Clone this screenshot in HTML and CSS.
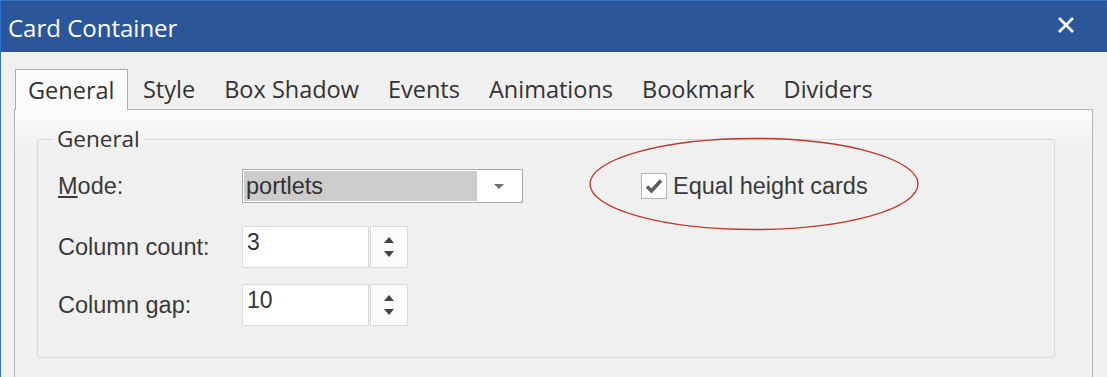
FILE: index.html
```html
<!DOCTYPE html>
<html lang="en">
<head>
  <meta charset="UTF-8" />
  <title>Card Container</title>
  <link rel="stylesheet" href="styles.css">
</head>
<body>

  <div class="window">
    <div class="titlebar">
      <span class="title">Card Container</span>
      <svg class="close" width="18" height="18" viewBox="0 0 18 18">
        <path d="M2 2 L16 16 M16 2 L2 16" stroke="#fff" stroke-width="2.6" fill="none"/>
      </svg>
    </div>

    <div class="tabs">
      <div class="tab active">General</div>
      <div class="tab">Style</div>
      <div class="tab">Box Shadow</div>
      <div class="tab">Events</div>
      <div class="tab">Animations</div>
      <div class="tab">Bookmark</div>
      <div class="tab">Dividers</div>
    </div>

    <div class="panel">
      <fieldset class="group">
        <legend>General</legend>

        <div class="row row-mode">
          <label class="label"><u>M</u>ode:</label>
          <div class="combo">
            <span class="combo-value">portlets</span>
            <span class="combo-arrow"></span>
          </div>
          <div class="check">
            <span class="check-box">
              <svg width="20" height="18" viewBox="0 0 20 18">
                <path d="M3 9.5 L7.5 14 L17 3.5" stroke="#5a5a5a" stroke-width="3.4" fill="none"/>
              </svg>
            </span>
            <span>Equal height cards</span>
            <!-- red annotation ring -->
            <svg class="ring" width="334" height="96" viewBox="0 0 334 96">
              <ellipse cx="167" cy="48" rx="164" ry="45.5" fill="none" stroke="#c0392b" stroke-width="1.4"/>
            </svg>
          </div>
        </div>

        <div class="row row-count">
          <label class="label">Column count:</label>
          <div class="spin">
            <span class="spin-value">3</span>
            <span class="spin-btns"><i class="up"></i><i class="down"></i></span>
          </div>
        </div>

        <div class="row row-gap">
          <label class="label">Column gap:</label>
          <div class="spin">
            <span class="spin-value">10</span>
            <span class="spin-btns"><i class="up"></i><i class="down"></i></span>
          </div>
        </div>
      </fieldset>
    </div>
  </div>

</body>
</html>
```

FILE: styles.css
```css
* {
  box-sizing: border-box;
  margin: 0;
  padding: 0;
}

html, body {
  height: 377px;
  overflow: hidden;
}

body {
  background: #f0f0f0;
  font-family: 'Liberation Sans', Arial, sans-serif;
  color: #3a3a3a;
}

.window {
  height: 377px;
  border-left: 1px solid #2a72d8;
}

/* Title bar */
.titlebar {
  height: 52px;
  background: #2b579a;
  border-top: 1px solid #3a6fc0;
  display: flex;
  align-items: center;
  justify-content: space-between;
  padding: 0 32px 0 7px;
}

.title {
  font-family: 'Open Sans', 'Noto Sans', sans-serif;
  font-size: 24px;
  color: #fff;
  margin-top: 2px;
}

.close {
  margin-top: -4px;
}

/* Tabs */
.tabs {
  display: flex;
  align-items: flex-end;
  margin-top: 16px;
  padding-left: 14px;
  height: 41px;
  font-family: 'Open Sans', 'Noto Sans', sans-serif;
  font-size: 23.5px;
  color: #333;
}

.tab {
  height: 40px;
  line-height: 40px;
  padding: 0 14.5px;
}

.tab.active {
  height: 41px;
  background: #fcfcfc;
  border: 1px solid #adadad;
  border-bottom: none;
  padding: 0 13px 0 12px;
  position: relative;
  z-index: 1;
  margin-bottom: -1px;
}

.panel {
  margin: 0 14px 0 13px;
  height: 300px;
  border: 1px solid #b6b6b6;
  background: linear-gradient(#fcfcfc, #f0f0f0 40px);
  padding: 16px 37px 0 22px;
}

/* Group box */
.group {
  border: 1px solid #d9d9d9;
  border-radius: 3px;
  padding: 0 0 29px 15px;
  height: 232px;
}

.group legend {
  font-family: 'Open Sans', 'Noto Sans', sans-serif;
  font-size: 22.5px;
  line-height: 26px;
  padding: 0 4px;
  color: #333;
}

.row {
  display: flex;
  align-items: center;
  padding-left: 5px;
}

.row-mode { margin-top: 17px; }
.row-count { margin-top: 23px; }
.row-gap { margin-top: 16px; }

.label {
  width: 184px;
  font-size: 23.5px;
}

/* Combo box */
.combo {
  width: 281px;
  height: 34px;
  border: 1px solid #a9a9a9;
  background: #fff;
  padding: 1px;
  display: flex;
  align-items: stretch;
}

.combo-value {
  width: 233px;
  background: #cccccc;
  font-size: 23.5px;
  line-height: 30px;
  padding-left: 2px;
  color: #333;
}

.combo-arrow {
  flex: 1;
  position: relative;
}

.combo-arrow::after {
  content: "";
  position: absolute;
  left: 17px;
  top: 13px;
  border-left: 5px solid transparent;
  border-right: 5px solid transparent;
  border-top: 5px solid #707070;
}

/* Checkbox */
.check {
  margin-left: 118px;
  display: flex;
  align-items: center;
  gap: 6px;
  font-size: 23.5px;
  position: relative;
}

.check-box {
  width: 26px;
  height: 26px;
  border: 1px solid #b4b4b4;
  background: #fff;
  display: flex;
  align-items: center;
  justify-content: center;
}

.ring {
  position: absolute;
  left: -54px;
  top: -37px;
  pointer-events: none;
}

/* Spin boxes */
.spin {
  display: flex;
  height: 42px;
}

.spin-value {
  width: 127px;
  border: 1px solid #dadada;
  background: #fff;
  font-size: 23px;
  padding: 2px 0 0 4px;
  color: #333;
}

.spin-btns {
  width: 38px;
  margin-left: 1px;
  border: 1px solid #dadada;
  background: #fbfbfb;
  display: flex;
  flex-direction: column;
  align-items: center;
  justify-content: center;
  gap: 8px;
}

.spin-btns i {
  display: block;
  border-left: 5px solid transparent;
  border-right: 5px solid transparent;
}

.spin-btns .up { border-bottom: 6px solid #444; }
.spin-btns .down { border-top: 6px solid #444; }
```
